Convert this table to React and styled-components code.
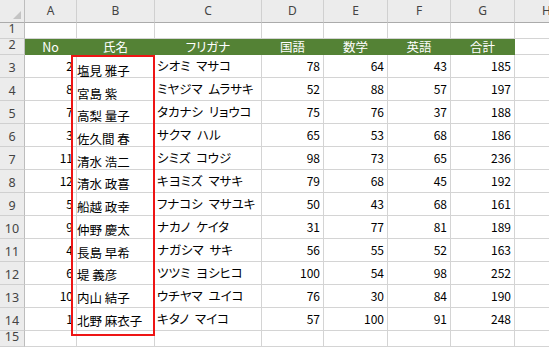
import React from "react";
import styled, { createGlobalStyle, css } from "styled-components";

const GlobalStyle = createGlobalStyle`
  html, body { margin: 0; padding: 0; background: #fff; overflow: hidden; }
  body { font-family: "Noto Sans CJK JP", "Noto Sans", sans-serif; }
`;

const COLS = ["A", "B", "C", "D", "E", "F", "G", "H"];
const WIDTHS = [25, 52, 78, 107, 62, 64, 63, 64, 64];
const HEIGHTS = [23, 16, 16, ...Array(12).fill(23), 16];

const HEADERS = ["No", "氏名", "フリガナ", "国語", "数学", "英語", "合計"];

const DATA = [
  [2, "塩見 雅子", "シオミ マサコ", 78, 64, 43, 185],
  [8, "宮島 紫", "ミヤジマ ムラサキ", 52, 88, 57, 197],
  [7, "高梨 量子", "タカナシ リョウコ", 75, 76, 37, 188],
  [3, "佐久間 春", "サクマ ハル", 65, 53, 68, 186],
  [11, "清水 浩二", "シミズ コウジ", 98, 73, 65, 236],
  [12, "清水 政喜", "キヨミズ マサキ", 79, 68, 45, 192],
  [5, "船越 政幸", "フナコシ マサユキ", 50, 43, 68, 161],
  [9, "仲野 慶太", "ナカノ ケイタ", 31, 77, 81, 189],
  [4, "長島 早希", "ナガシマ サキ", 56, 55, 52, 163],
  [6, "堤 義彦", "ツツミ ヨシヒコ", 100, 54, 98, 252],
  [10, "内山 結子", "ウチヤマ ユイコ", 76, 30, 84, 190],
  [1, "北野 麻衣子", "キタノ マイコ", 57, 100, 91, 248],
];

const GRID = "#d4d4d4";
const HEAD_BG = "#ececec";
const GREEN = "#548235";

const Sheet = styled.div`
  position: relative;
  width: 549px;
  height: 347px;
  overflow: hidden;
`;

const Grid = styled.div`
  display: grid;
  grid-template-columns: ${WIDTHS.map((w) => w + "px").join(" ")};
  grid-template-rows: ${HEIGHTS.map((h) => h + "px").join(" ")};
`;

const Corner = styled.div`
  box-sizing: border-box;
  background: ${HEAD_BG};
  border-right: 1px solid #bdbdbd;
  border-bottom: 1px solid #ababab;
  display: flex;
  align-items: flex-end;
  justify-content: flex-end;
  padding: 0 3px 3px 0;
`;

const ColHead = styled.div`
  box-sizing: border-box;
  background: ${HEAD_BG};
  border-right: 1px solid #d0d0d0;
  border-bottom: 1px solid #ababab;
  display: flex;
  align-items: flex-end;
  justify-content: center;
  padding-bottom: 4px;
  font-family: "Noto Sans", sans-serif;
  font-size: 12px;
  line-height: 14px;
  color: #444;
  white-space: nowrap;
`;

const RowHead = styled.div`
  box-sizing: border-box;
  background: ${HEAD_BG};
  border-right: 1px solid #bdbdbd;
  border-bottom: 1px solid #d0d0d0;
  display: flex;
  align-items: flex-end;
  justify-content: center;
  padding-bottom: 2px;
  font-family: "Noto Sans", sans-serif;
  font-size: 12.5px;
  line-height: 14px;
  color: #444;
`;

const Cell = styled.div`
  box-sizing: border-box;
  border-right: 1px solid ${GRID};
  border-bottom: 1px solid ${GRID};
  display: flex;
  align-items: flex-end;
  justify-content: ${(p) =>
    p.$align === "right" ? "flex-end" : p.$align === "center" ? "center" : "flex-start"};
  padding: 0 3px 4px 2px;
  font-size: 12px;
  line-height: 14px;
  color: #000;
  white-space: pre;
  overflow: hidden;
  ${(p) =>
    p.$kana &&
    css`
      font-feature-settings: "palt";
      font-size: 12.5px;
      word-spacing: 3px;
    `}
  ${(p) =>
    p.$head &&
    css`
      background: ${GREEN};
      border-color: ${GREEN};
      color: #fff;
      font-size: 12.5px;
      line-height: 13px;
      font-feature-settings: "palt";
      padding: 0 0 1px 0;
      overflow: visible;
    `}
`;

const NameBox = styled.div`
  position: absolute;
  left: 71px;
  top: 55px;
  width: 84px;
  height: 281px;
  box-sizing: border-box;
  border: 2px solid #ee1515;
  padding: 3px 0 0 4px;
`;

const NameLine = styled.div`
  font-size: 12.5px;
  line-height: 22.7px;
  height: 22.7px;
  color: #000;
  white-space: nowrap;
`;

function CornerTriangle() {
  return (
    <svg width="8" height="8" viewBox="0 0 8 8">
      <polygon points="8,0 8,8 0,8" fill="#c4c4c4" />
    </svg>
  );
}

export default function App() {
  const cells = [];
  cells.push(
    <Corner key="corner">
      <CornerTriangle />
    </Corner>
  );
  COLS.forEach((c) => cells.push(<ColHead key={"h" + c}>{c}</ColHead>));

  cells.push(<RowHead key="r1">1</RowHead>);
  COLS.forEach((c) => cells.push(<Cell key={"1" + c} />));

  cells.push(<RowHead key="r2">2</RowHead>);
  HEADERS.forEach((h, i) =>
    cells.push(
      <Cell key={"2" + i} $head $align="center">
        {h}
      </Cell>
    )
  );
  cells.push(<Cell key="2H" />);

  DATA.forEach((row, ri) => {
    const r = ri + 3;
    cells.push(<RowHead key={"r" + r}>{r}</RowHead>);
    cells.push(
      <Cell key={r + "A"} $align="right">
        {row[0]}
      </Cell>
    );
    cells.push(<Cell key={r + "B"} />);
    cells.push(
      <Cell key={r + "C"} $kana>
        {row[2]}
      </Cell>
    );
    [3, 4, 5, 6].forEach((i) =>
      cells.push(
        <Cell key={r + "n" + i} $align="right">
          {row[i]}
        </Cell>
      )
    );
    cells.push(<Cell key={r + "H"} />);
  });

  cells.push(<RowHead key="r15">15</RowHead>);
  COLS.forEach((c) => cells.push(<Cell key={"15" + c} />));

  return (
    <>
      <GlobalStyle />
      <Sheet>
        <Grid>{cells}</Grid>
        <NameBox>
          {DATA.map((row, i) => (
            <NameLine key={i}>{row[1]}</NameLine>
          ))}
        </NameBox>
      </Sheet>
    </>
  );
}
